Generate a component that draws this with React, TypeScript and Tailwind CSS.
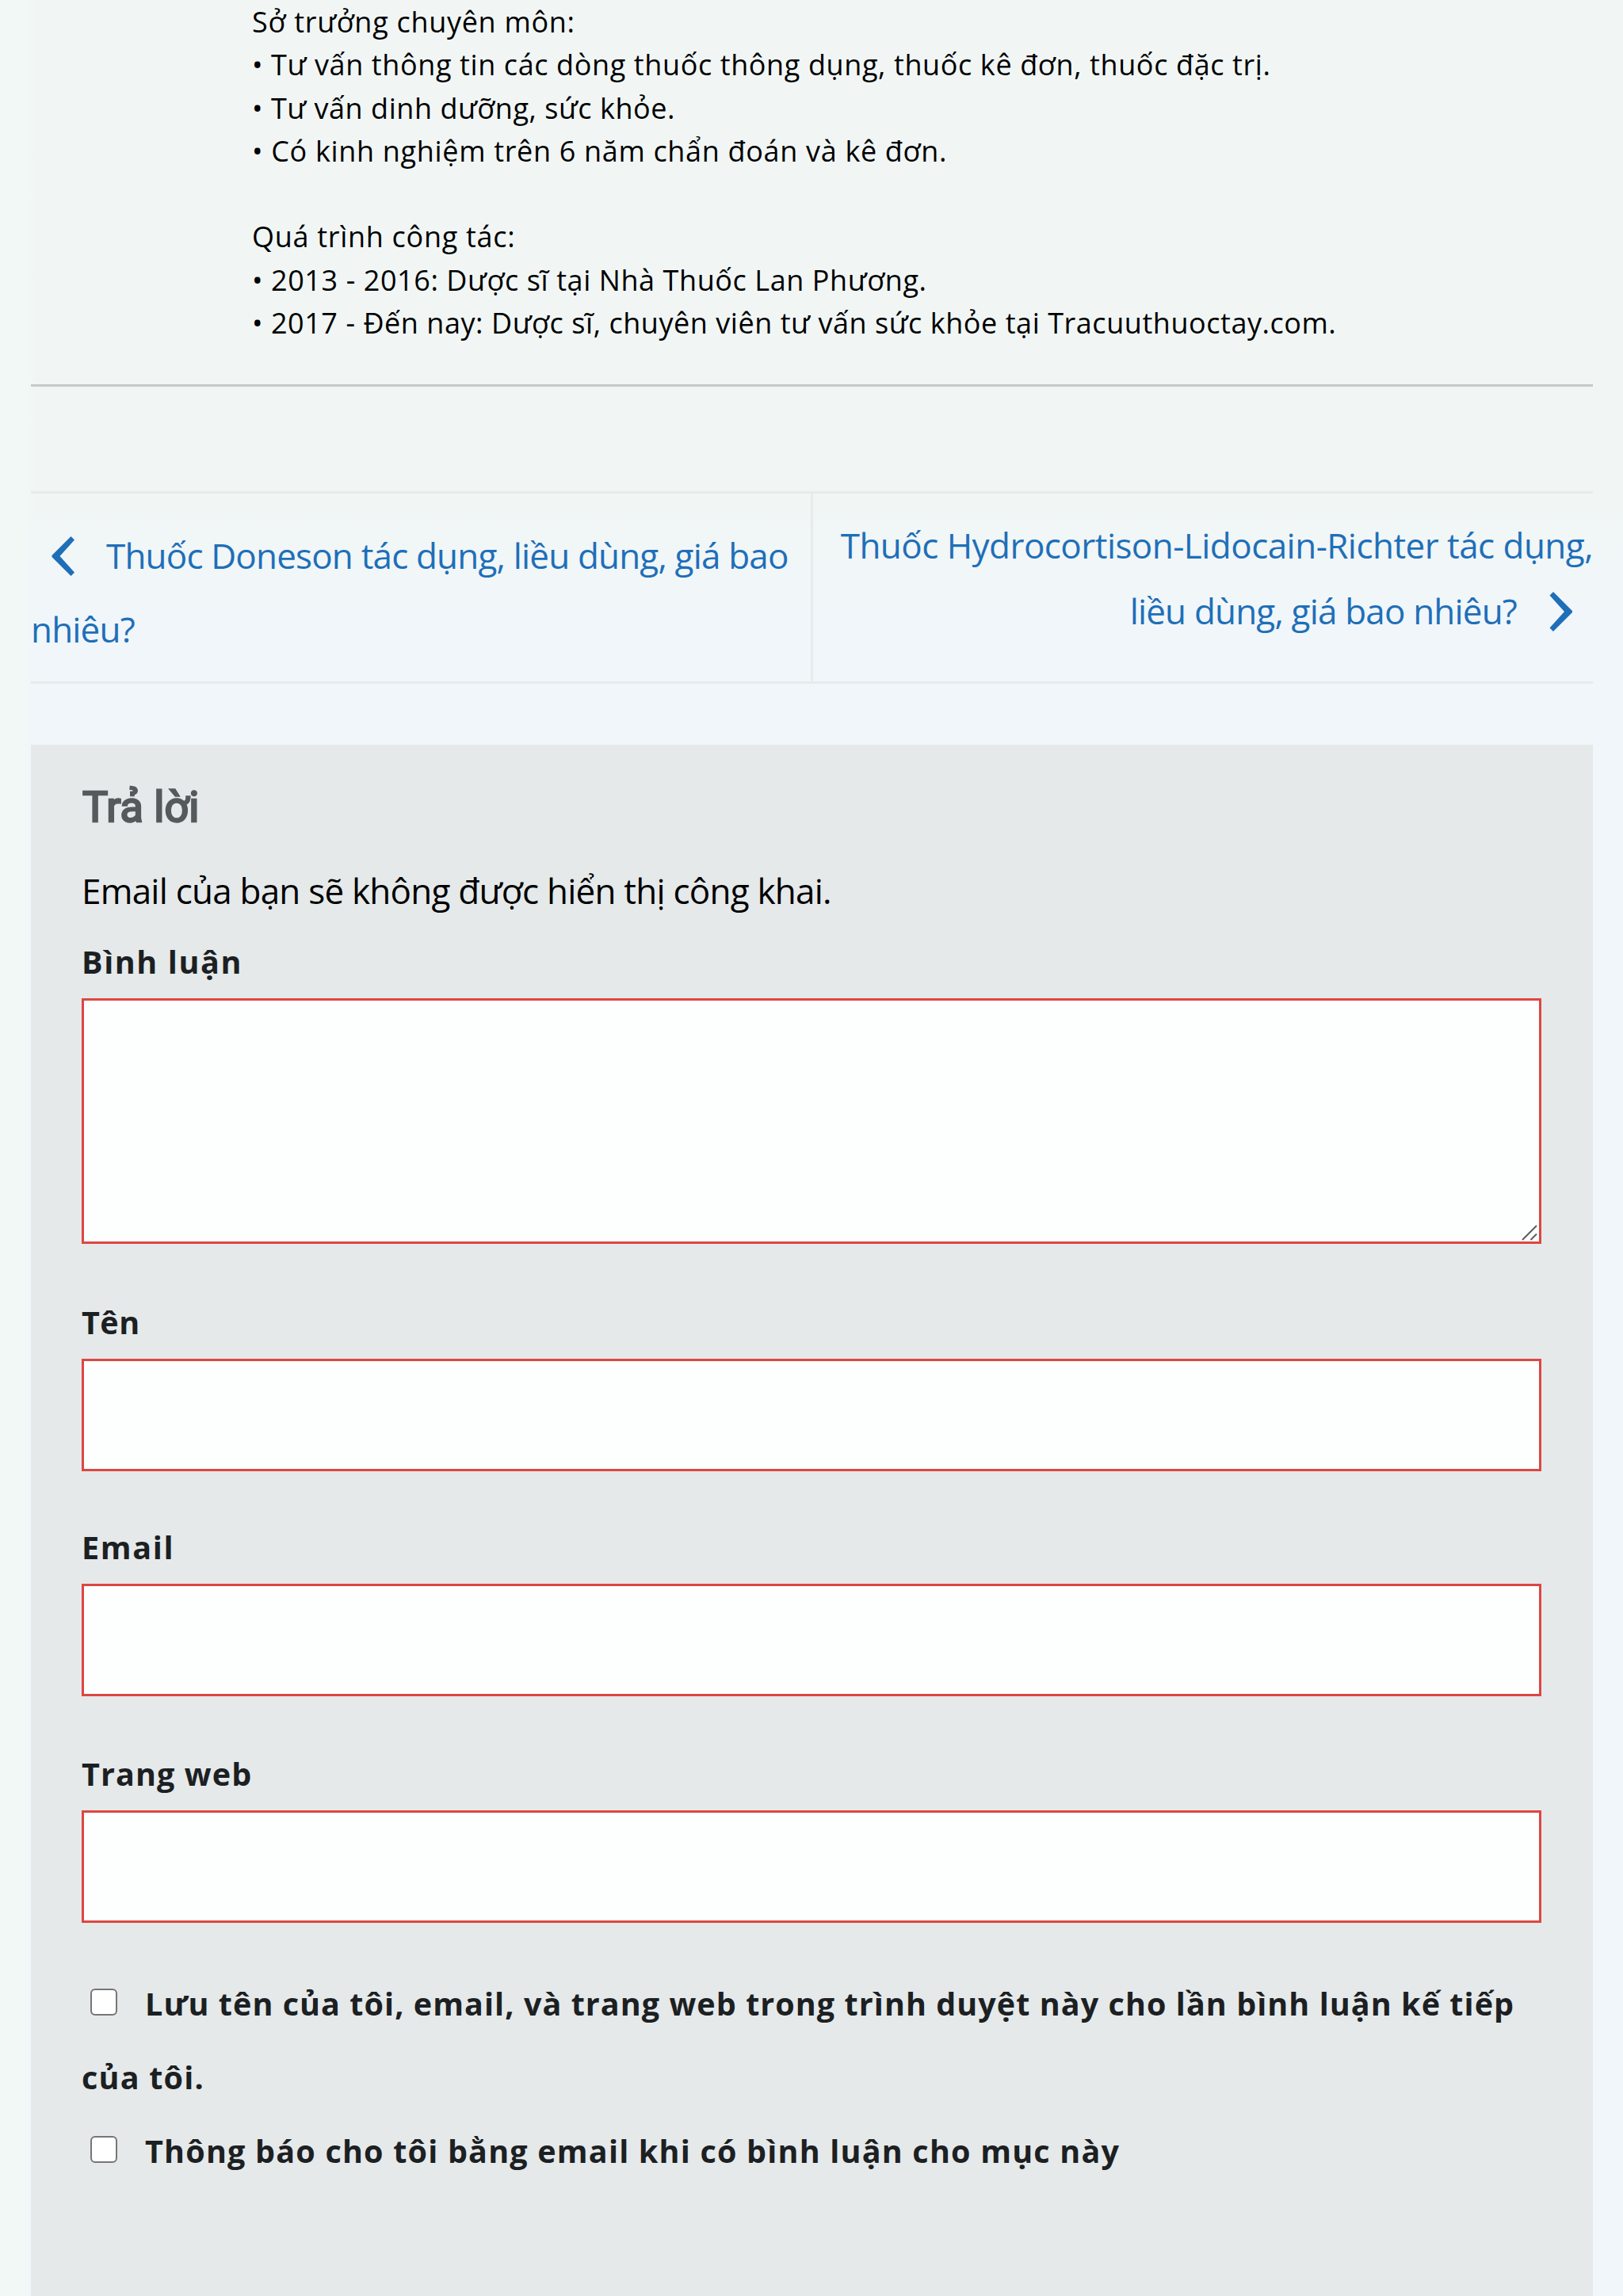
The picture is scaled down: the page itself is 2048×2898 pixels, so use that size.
import React from 'react';

const authorLines = [
    { text: 'Sở trưởng chuyên môn:', tracking: 'tracking-[0.7px]' },
    { text: '• Tư vấn thông tin các dòng thuốc thông dụng, thuốc kê đơn, thuốc đặc trị.', tracking: 'tracking-[0.61px]' },
    { text: '• Tư vấn dinh dưỡng, sức khỏe.', tracking: 'tracking-[0.53px]' },
    { text: '• Có kinh nghiệm trên 6 năm chẩn đoán và kê đơn.', tracking: 'tracking-[0.67px]' },
    { text: '', tracking: '' },
    { text: 'Quá trình công tác:', tracking: 'tracking-[0.7px]' },
    { text: '• 2013 - 2016: Dược sĩ tại Nhà Thuốc Lan Phương.', tracking: 'tracking-[0.58px]' },
    { text: '• 2017 - Đến nay: Dược sĩ, chuyên viên tư vấn sức khỏe tại Tracuuthuoctay.com.', tracking: 'tracking-[0.545px]' },
];

const AuthorBox: React.FC = () => (
    <section className="h-[488px] border-b-[3px] border-[#c5caca] pt-[1px] pl-[279px] text-[36px] leading-[54.25px] text-black">
        {authorLines.map((line, i) => (
            <p key={i} className={`h-[54.25px] whitespace-nowrap ${line.tracking}`}>{line.text}</p>
        ))}
    </section>
);

const PostNav: React.FC = () => (
    <nav className="mt-[132px] flex h-[243px] border-y-[3px] border-[#e7ebeb] text-[44px] tracking-[-0.82px] whitespace-nowrap text-[#1e6fb8]">
        <a href="#" className="block w-[987px] border-r-[3px] border-[#e7ebeb] pt-[32px] leading-[93px]">
            <svg className="mr-[39px] ml-[26px] inline-block h-[50px] w-[30px] align-[-9px]" viewBox="0 0 30 50" fill="currentColor">
                <path d="M24.500 0 L29 4.500 L10.500 25 L29 45.500 L24.500 50 L0.500 26 V24 Z" />
            </svg>
            Thuốc Doneson tác dụng, liều dùng, giá bao
            <br />
            nhiêu?
        </a>
        <a href="#" className="block flex-1 pt-[24px] text-right leading-[82.5px]">
            <span className="tracking-[-0.54px]">Thuốc Hydrocortison-Lidocain-Richter tác dụng,</span>
            <br />
            liều dùng, giá bao nhiêu?
            <svg className="mr-[25px] ml-[41px] inline-block h-[50px] w-[30px] align-[-9px]" viewBox="0 0 30 50" fill="currentColor">
                <path d="M5 0 L0.500 4.500 L19 25 L0.500 45.500 L5 50 L29 26 V24 Z" />
            </svg>
        </a>
    </nav>
);

const labelClass = 'block text-[39.5px] font-bold text-[#1c2022]';
const inputClass = 'block w-full border-[3px] border-[#dd4742] bg-[#fdfffe] outline-none';

const Field: React.FC<{ id: string; label: string; className: string }> = ({ id, label, className }) => (
    <div className={className}>
        <label htmlFor={id} className={`${labelClass} leading-[60px]`}>{label}</label>
        <input id={id} type="text" className={`${inputClass} mt-[16px] h-[142px]`} />
    </div>
);

const Checkbox: React.FC = () => (
    <input
        type="checkbox"
        className="mr-[35px] ml-[11px] inline-block h-[34px] w-[34px] appearance-none rounded-[6px] border-[2.5px] border-[#767676] bg-white align-[0px]"
    />
);

const CommentForm: React.FC = () => (
    <section className="mt-[77px] h-[1958px] bg-[#e5e9ea] pt-[43px] pr-[65px] pl-[64px]">
        <h3 className="pl-px font-['Roboto',sans-serif] text-[54px] leading-[72px] font-normal tracking-[0px] text-[#555a5c] [-webkit-text-stroke:2.4px_#555a5c]">Trả lời</h3>
        <p className="mt-[39px] text-[44px] leading-[60px] tracking-[-0.77px] text-black">Email của bạn sẽ không được hiển thị công khai.</p>
        <form className="mt-[30px]">
            <label htmlFor="comment" className={`${labelClass} leading-[60px] tracking-[1.6px]`}>Bình luận</label>
            <div className="relative mt-[16px] mb-[69px]">
                <textarea id="comment" className={`${inputClass} h-[310px] resize-none`} />
                <svg className="absolute right-[5px] bottom-[4px] h-[20px] w-[20px]" viewBox="0 0 20 20" fill="none" stroke="#5c5c5c" strokeWidth="2">
                    <path d="M1 19 L19 1 M11.500 19 L19 11.500" />
                </svg>
            </div>
            <Field id="name" label="Tên" className="h-[284px] tracking-[0.5px]" />
            <Field id="email" label="Email" className="h-[286px] tracking-[1.7px]" />
            <Field id="url" label="Trang web" className="h-[285px] tracking-[1.1px]" />
            <div className={`${labelClass} mt-[-11px] leading-[93px] tracking-[1.2px] whitespace-nowrap`}>
                <p>
                    <Checkbox />
                    <span className="tracking-[1.06px]">Lưu tên của tôi, email, và trang web trong trình duyệt này cho lần bình luận kế tiếp</span>
                    <br />
                    của tôi.
                </p>
                <p>
                    <Checkbox />
                    Thông báo cho tôi bằng email khi có bình luận cho mục này
                </p>
            </div>
        </form>
    </section>
);

const App: React.FC = () => {
    return (
        <main className="h-[2898px] w-[2048px] overflow-hidden bg-[linear-gradient(90deg,#f1f8f6_0px,#f1f8f6_30px,#f1f8f600_48px),linear-gradient(180deg,#f1f6f5_0px,#f1f6f5_640px,#f1f6fa_780px,#f1f6fa_100%)] pr-[38px] pl-[39px] font-['Open_Sans','Noto_Sans',sans-serif]">
            <AuthorBox />
            <PostNav />
            <CommentForm />
        </main>
    );
};

export default App;
